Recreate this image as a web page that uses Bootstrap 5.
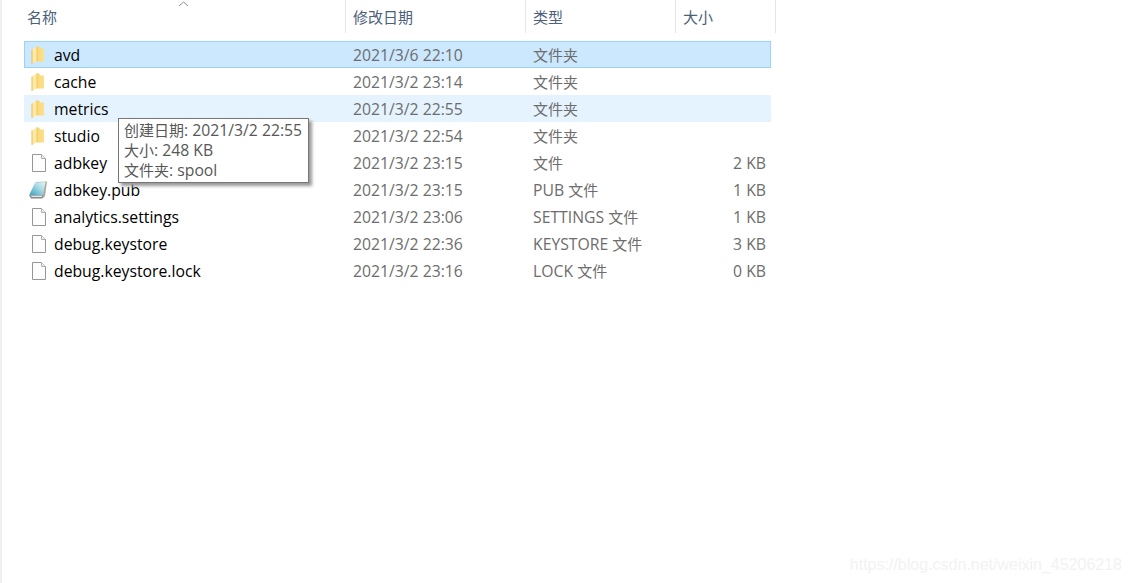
<!DOCTYPE html>
<html lang="zh">
<head>
<meta charset="utf-8">
<title>文件列表</title>
<link href="https://cdn.jsdelivr.net/npm/bootstrap@5.3.0/dist/css/bootstrap.min.css" rel="stylesheet">
<style>
html,body{height:100%;margin:0;background:#fff;overflow:hidden}
body{font-family:"Open Sans","Noto Sans CJK SC",sans-serif;font-size:15.75px;line-height:20px;color:#000}
.cjk{font-size:15px;line-height:1}
.explorer{position:relative;height:583px;width:1131px;border-left:2px solid #f0f0f0;padding-left:22px}
.head-row{height:34px;width:752px;position:relative}
.head-cell{height:33px;padding-top:7px;border-right:1px solid #e5e5e5;color:#4c607a;font-size:15px;padding-left:7px}
.sort-mark{position:absolute;left:154px;top:1px}
.c-name{width:321px;flex:none}
.c-date{width:180px;flex:none;color:#6d6d6d}
.c-type{width:150px;flex:none;color:#6d6d6d}
.c-type.cjk{line-height:20px}
.c-size{width:95px;flex:none;color:#6d6d6d;text-align:right;padding-right:4px}
.head-row .c-name,.head-row .c-date,.head-row .c-type,.head-row .c-size{color:#4c607a;text-align:left}
.head-row .c-name{width:322px;padding-left:3px}
.head-row .c-date{width:180px}
.head-row .c-type{width:150px}
.head-row .c-size{width:100px;padding-left:7px}
.file-list{width:747px;margin-top:7px}
.file-row{height:27px;align-items:center}
.file-row .c-date,.file-row .c-type{padding-left:8px}
.file-row.is-selected{background:#cce8ff;box-shadow:inset 0 0 0 1px #99d1ff}
.file-row.is-hover{background:#e5f3ff}
.name-in{display:flex;align-items:center;gap:7px;padding-left:5px}
.ico{width:18px;height:18px;flex:none;display:block}
.tip{position:absolute;left:116px;top:118px;width:191px;height:65px;background:#fff;border:1px solid #767676;box-shadow:3px 3px 3px #9a9a9a;padding:1px 5px;color:#575757;font-size:15.75px;line-height:20px;white-space:nowrap}
.mark-text{position:absolute;right:9px;top:555px;font-family:"Liberation Sans",sans-serif;font-size:16px;line-height:20px;color:#f2f2f2}
</style>
</head>
<body>
<svg width="0" height="0" class="position-absolute">
<defs>
<linearGradient id="fg" x1="0" x2="1" y1="0" y2="0"><stop offset="0" stop-color="#f9d873"/><stop offset="1" stop-color="#fcdf8a"/></linearGradient>
<linearGradient id="ng" x1="0" x2="1" y1="1" y2="0"><stop offset="0" stop-color="#3b9bbf"/><stop offset=".6" stop-color="#a9dbe6"/><stop offset="1" stop-color="#e4f4f7"/></linearGradient>
<symbol id="i-folder" viewBox="0 0 18 18"><path d="M7 .500h3l1.500 2H15V15.500H7z" fill="url(#fg)"/><path d="M3 3.500L8 .500V15l-5 3z" fill="#ffe9a5"/><path d="M3 3.500V18" stroke="#e8bd58" fill="none"/><path d="M8 .500V15" stroke="#eec565" fill="none"/></symbol>
<symbol id="i-file" viewBox="0 0 18 18"><path d="M3.500.500h9l4 4v13h-13z" fill="#fdfdfd" stroke="#969696"/><path d="M12.500.500v4h4" fill="#eeeeee" stroke="#b0b0b0"/></symbol>
<symbol id="i-pub" viewBox="0 0 18 18"><path d="M7 1L18 .500 16 15l-2 2.500z" fill="#a9a89a"/><path d="M6 1.500l10.500-.500-2.500 13.500H0z" fill="url(#ng)"/><path d="M0 14.500h14l-.5 3H2z" fill="#8a8a8a"/><path d="M2 15h11l-.2 1H3z" fill="#e6e6e6"/></symbol>
</defs>
</svg>
<div class="explorer">
  <div class="head-row d-flex">
    <svg class="sort-mark" width="12" height="6" viewBox="0 0 12 6"><path d="M1 5l4.500-4L10 5" fill="none" stroke="#8a8a8a"/></svg>
    <div class="head-cell c-name">名称</div>
    <div class="head-cell c-date">修改日期</div>
    <div class="head-cell c-type">类型</div>
    <div class="head-cell c-size">大小</div>
  </div>
  <div class="file-list">
    <div class="file-row d-flex is-selected"><div class="c-name name-in"><svg class="ico"><use href="#i-folder"/></svg>avd</div><div class="c-date">2021/3/6 22:10</div><div class="c-type cjk">文件夹</div><div class="c-size"></div></div>
    <div class="file-row d-flex"><div class="c-name name-in"><svg class="ico"><use href="#i-folder"/></svg>cache</div><div class="c-date">2021/3/2 23:14</div><div class="c-type cjk">文件夹</div><div class="c-size"></div></div>
    <div class="file-row d-flex is-hover"><div class="c-name name-in"><svg class="ico"><use href="#i-folder"/></svg>metrics</div><div class="c-date">2021/3/2 22:55</div><div class="c-type cjk">文件夹</div><div class="c-size"></div></div>
    <div class="file-row d-flex"><div class="c-name name-in"><svg class="ico"><use href="#i-folder"/></svg>studio</div><div class="c-date">2021/3/2 22:54</div><div class="c-type cjk">文件夹</div><div class="c-size"></div></div>
    <div class="file-row d-flex"><div class="c-name name-in"><svg class="ico"><use href="#i-file"/></svg>adbkey</div><div class="c-date">2021/3/2 23:15</div><div class="c-type cjk">文件</div><div class="c-size">2 KB</div></div>
    <div class="file-row d-flex"><div class="c-name name-in"><svg class="ico"><use href="#i-pub"/></svg>adbkey.pub</div><div class="c-date">2021/3/2 23:15</div><div class="c-type">PUB <span class="cjk">文件</span></div><div class="c-size">1 KB</div></div>
    <div class="file-row d-flex"><div class="c-name name-in"><svg class="ico"><use href="#i-file"/></svg>analytics.settings</div><div class="c-date">2021/3/2 23:06</div><div class="c-type">SETTINGS <span class="cjk">文件</span></div><div class="c-size">1 KB</div></div>
    <div class="file-row d-flex"><div class="c-name name-in"><svg class="ico"><use href="#i-file"/></svg>debug.keystore</div><div class="c-date">2021/3/2 22:36</div><div class="c-type">KEYSTORE <span class="cjk">文件</span></div><div class="c-size">3 KB</div></div>
    <div class="file-row d-flex"><div class="c-name name-in"><svg class="ico"><use href="#i-file"/></svg>debug.keystore.lock</div><div class="c-date">2021/3/2 23:16</div><div class="c-type">LOCK <span class="cjk">文件</span></div><div class="c-size">0 KB</div></div>
  </div>
  <div class="tip"><span class="cjk">创建日期</span>: 2021/3/2 22:55<br><span class="cjk">大小</span>: 248 KB<br><span class="cjk">文件夹</span>: spool</div>
  <div class="mark-text">https://blog.csdn.net/weixin_45206218</div>
</div>
<script src="https://cdn.jsdelivr.net/npm/bootstrap@5.3.0/dist/js/bootstrap.bundle.min.js"></script>
</body>
</html>
